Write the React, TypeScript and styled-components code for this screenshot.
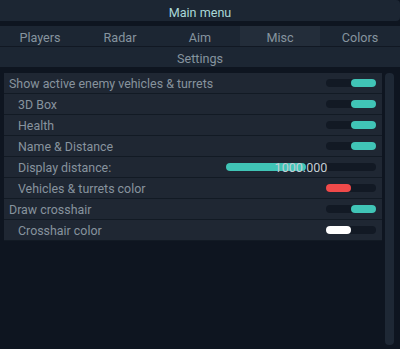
import React from "react";
import styled, { createGlobalStyle } from "styled-components";

const GlobalStyle = createGlobalStyle`
  html, body {
    margin: 0;
    padding: 0;
    background: #0e1520;
  }
  body {
    font-family: Roboto, "Liberation Sans", Arial, sans-serif;
    font-size: 12.4px;
  }
`;

const tabs = ["Players", "Radar", "Aim", "Misc", "Colors"];

type Item =
  | { kind: "toggle"; label: string; sub?: boolean; on: boolean }
  | { kind: "slider"; label: string; sub?: boolean; value: number; max: number }
  | { kind: "color"; label: string; sub?: boolean; color: string };

const items: Item[] = [
  { kind: "toggle", label: "Show active enemy vehicles & turrets", on: true },
  { kind: "toggle", label: "3D Box", sub: true, on: true },
  { kind: "toggle", label: "Health", sub: true, on: true },
  { kind: "toggle", label: "Name & Distance", sub: true, on: true },
  { kind: "slider", label: "Display distance:", sub: true, value: 1000, max: 1875 },
  { kind: "color", label: "Vehicles & turrets color", sub: true, color: "#f04a4a" },
  { kind: "toggle", label: "Draw crosshair", on: true },
  { kind: "color", label: "Crosshair color", sub: true, color: "#ffffff" },
];

const App = () => {
  return (
    <Window>
      <GlobalStyle />
      <TitleBar>Main menu</TitleBar>
      <Header>
        <Tabs>
          {tabs.map((t) => (
            <Tab key={t} $active={t === "Misc"}>
              {t}
            </Tab>
          ))}
        </Tabs>
        <SubTitle>Settings</SubTitle>
      </Header>
      <Body>
        <List>
          {items.map((it) => (
            <Row key={it.label}>
              <Label $sub={!!it.sub}>{it.label}</Label>
              {it.kind === "toggle" && (
                <Track>
                  <Fill $on={it.on} />
                </Track>
              )}
              {it.kind === "color" && (
                <Track>
                  <Swatch style={{ background: it.color }} />
                </Track>
              )}
              {it.kind === "slider" && (
                <SliderTrack>
                  <SliderFill style={{ width: `${(it.value / it.max) * 100}%` }} />
                  <SliderValue>{it.value.toFixed(3)}</SliderValue>
                </SliderTrack>
              )}
            </Row>
          ))}
        </List>
        <Scrollbar />
      </Body>
    </Window>
  );
};

export default App;

const Window = styled.div`
  width: 400px;
  height: 349px;
  display: flex;
  flex-direction: column;
  background: #0e1520;
  overflow: hidden;
`;

const TitleBar = styled.div`
  height: 21px;
  box-sizing: border-box;
  padding-top: 3px;
  display: flex;
  align-items: center;
  justify-content: center;
  background: #1c2633;
  border-radius: 0 4px 4px 0;
  color: #aad8d8;
  font-size: 12.6px;
`;

const Header = styled.div`
  margin-top: 5px;
  background: #1c2633;
`;

const Tabs = styled.div`
  display: grid;
  grid-template-columns: repeat(5, 1fr);
  height: 20px;
  border-bottom: 1px solid #111823;
`;

const Tab = styled.div<{ $active: boolean }>`
  display: flex;
  align-items: center;
  justify-content: center;
  padding-top: 2px;
  color: #86949f;
  font-size: 12.6px;
  background: ${(p) => (p.$active ? "#232d3a" : "transparent")};
`;

const SubTitle = styled.div`
  height: 20px;
  box-sizing: border-box;
  padding-top: 2px;
  display: flex;
  align-items: center;
  justify-content: center;
  color: #86949f;
  font-size: 12.6px;
`;

const Body = styled.div`
  flex: 1;
  display: flex;
  padding: 6px 6px 4px 4px;
  gap: 3px;
`;

const List = styled.div`
  flex: 1;
  display: flex;
  flex-direction: column;
  align-self: flex-start;
`;

const Row = styled.div`
  height: 20px;
  display: flex;
  align-items: center;
  justify-content: space-between;
  padding-right: 6px;
  background: #1f2733;
  border-bottom: 1px solid #121a24;
`;

const Label = styled.span<{ $sub: boolean }>`
  padding-left: ${(p) => (p.$sub ? "14px" : "5px")};
  padding-top: 1px;
  color: #87939e;
  font-size: 12.4px;
`;

const Track = styled.div`
  position: relative;
  width: 50px;
  height: 8px;
  border-radius: 4px;
  background: #121924;
`;

const Fill = styled.div<{ $on: boolean }>`
  position: absolute;
  top: 0;
  bottom: 0;
  ${(p) => (p.$on ? "right: 0;" : "left: 0;")}
  width: 25px;
  border-radius: 4px;
  background: #40c4b6;
`;

const Swatch = styled.div`
  position: absolute;
  top: 0;
  bottom: 0;
  left: 0;
  width: 25px;
  border-radius: 4px;
`;

const SliderTrack = styled.div`
  position: relative;
  width: 150px;
  height: 8px;
  border-radius: 4px;
  background: #121924;
`;

const SliderFill = styled.div`
  height: 100%;
  border-radius: 4px;
  background: #40c4b6;
`;

const SliderValue = styled.span`
  position: absolute;
  inset: 0;
  display: flex;
  align-items: center;
  justify-content: center;
  color: #c4ccd4;
  font-size: 12.6px;
`;

const Scrollbar = styled.div`
  width: 9px;
  border-radius: 4px;
  background: #1e2835;
`;
